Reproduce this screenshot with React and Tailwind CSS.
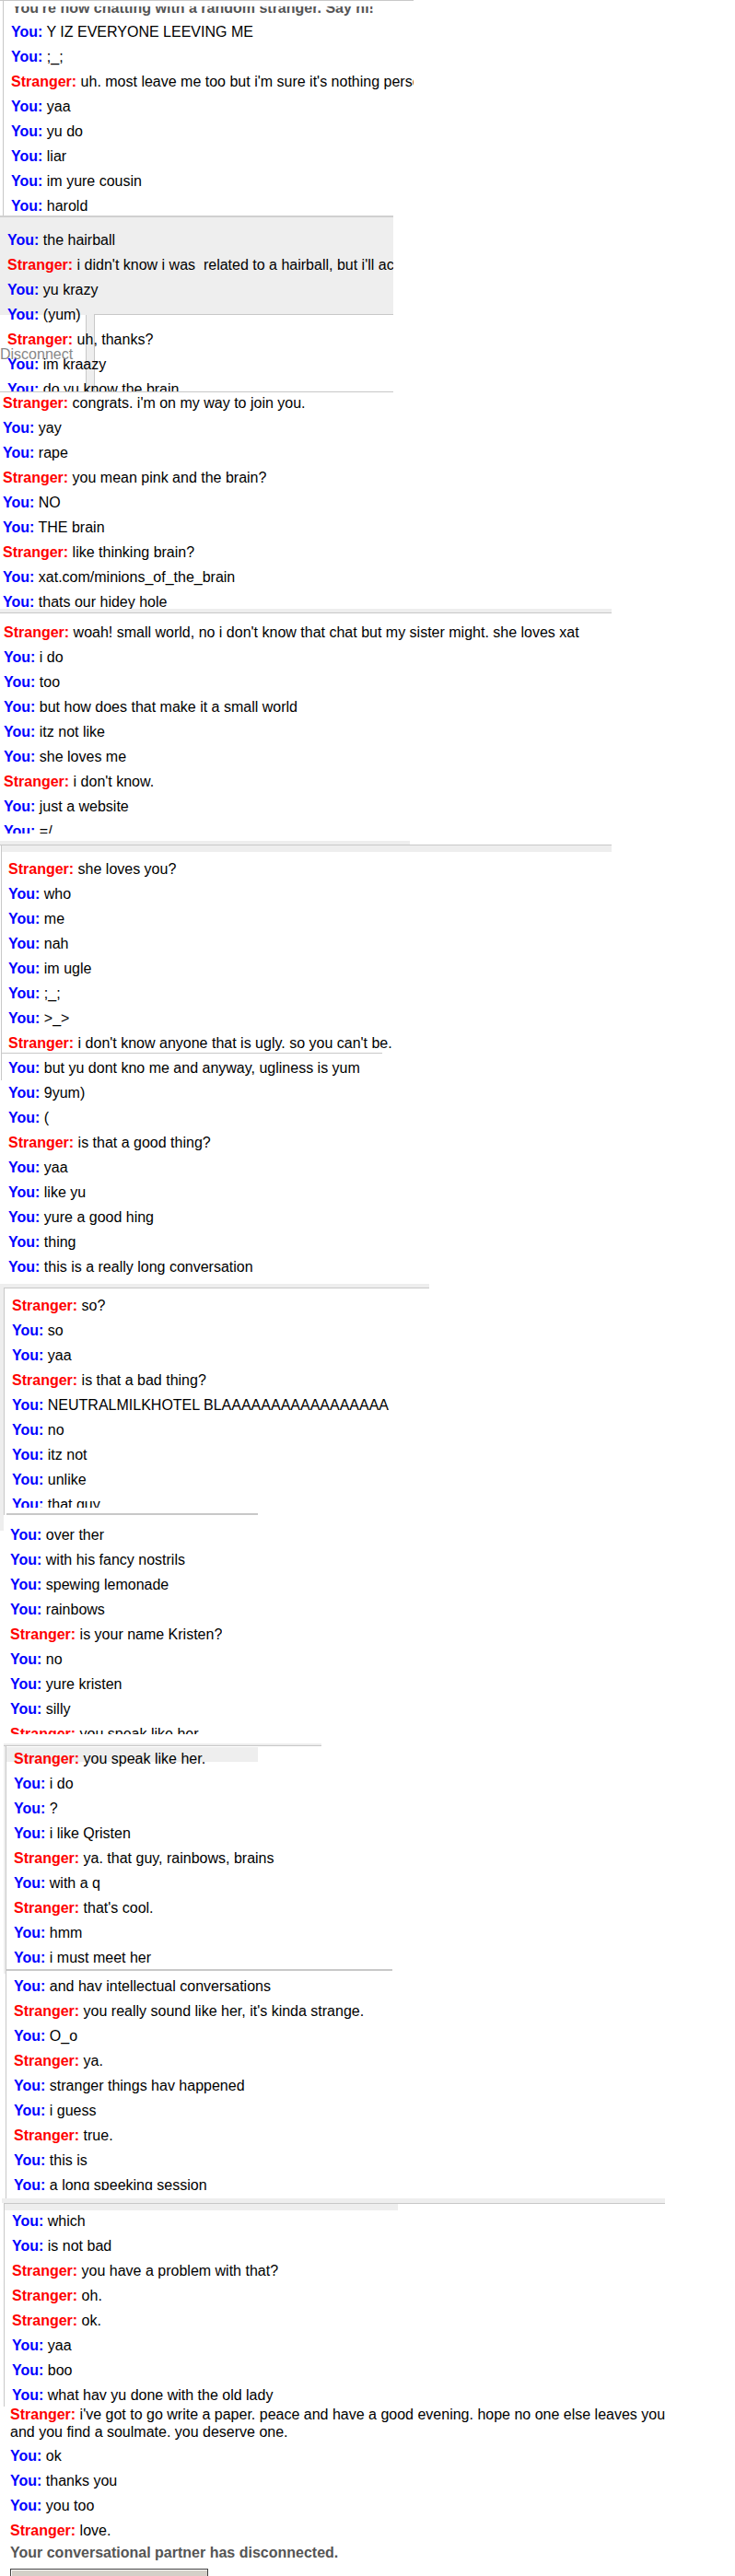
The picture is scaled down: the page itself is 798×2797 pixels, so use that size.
import clsx from "clsx";

const s1 = [
  ["you", "Y IZ EVERYONE LEEVING ME"],
  ["you", ";_;"],
  ["stranger", "uh. most leave me too but i'm sure it's nothing personal."],
  ["you", "yaa"],
  ["you", "yu do"],
  ["you", "liar"],
  ["you", "im yure cousin"],
  ["you", "harold"],
];

const s2 = [
  ["you", "the hairball"],
  ["stranger", "i didn't know i was  related to a hairball, but i'll accept that"],
  ["you", "yu krazy"],
  ["you", "(yum)"],
  ["stranger", "uh, thanks?"],
  ["you", "im kraazy"],
  ["you", "do yu know the brain"],
];

const s3 = [
  ["stranger", "congrats. i'm on my way to join you."],
  ["you", "yay"],
  ["you", "rape"],
  ["stranger", "you mean pink and the brain?"],
  ["you", "NO"],
  ["you", "THE brain"],
  ["stranger", "like thinking brain?"],
  ["you", "xat.com/minions_of_the_brain"],
  ["you", "thats our hidey hole"],
];

const s4 = [
  ["stranger", "woah! small world, no i don't know that chat but my sister might. she loves xat"],
  ["you", "i do"],
  ["you", "too"],
  ["you", "but how does that make it a small world"],
  ["you", "itz not like"],
  ["you", "she loves me"],
  ["stranger", "i don't know."],
  ["you", "just a website"],
  ["you", "=/"],
];

const s5a = [
  ["stranger", "she loves you?"],
  ["you", "who"],
  ["you", "me"],
  ["you", "nah"],
  ["you", "im ugle"],
  ["you", ";_;"],
  ["you", ">_>"],
  ["stranger", "i don't know anyone that is ugly. so you can't be."],
];

const s5b = [
  ["you", "9yum)"],
  ["you", "("],
  ["stranger", "is that a good thing?"],
  ["you", "yaa"],
  ["you", "like yu"],
  ["you", "yure a good hing"],
  ["you", "thing"],
  ["you", "this is a really long conversation"],
];

const s6 = [
  ["stranger", "so?"],
  ["you", "so"],
  ["you", "yaa"],
  ["stranger", "is that a bad thing?"],
  ["you", "NEUTRALMILKHOTEL BLAAAAAAAAAAAAAAAAA"],
  ["you", "no"],
  ["you", "itz not"],
  ["you", "unlike"],
  ["you", "that guy"],
];

const s7 = [
  ["you", "over ther"],
  ["you", "with his fancy nostrils"],
  ["you", "spewing lemonade"],
  ["you", "rainbows"],
  ["stranger", "is your name Kristen?"],
  ["you", "no"],
  ["you", "yure kristen"],
  ["you", "silly"],
  ["stranger", "you speak like her."],
];

const s8a = [
  ["you", "i do"],
  ["you", "?"],
  ["you", "i like Qristen"],
  ["stranger", "ya. that guy, rainbows, brains"],
  ["you", "with a q"],
  ["stranger", "that's cool."],
  ["you", "hmm"],
  ["you", "i must meet her"],
];

const s8b = [
  ["you", "and hav intellectual conversations"],
  ["stranger", "you really sound like her, it's kinda strange."],
  ["you", "O_o"],
  ["stranger", "ya."],
  ["you", "stranger things hav happened"],
  ["you", "i guess"],
  ["stranger", "true."],
  ["you", "this is"],
  ["you", "a long speeking session"],
];

const s9 = [
  ["you", "which"],
  ["you", "is not bad"],
  ["stranger", "you have a problem with that?"],
  ["stranger", "oh."],
  ["stranger", "ok."],
  ["you", "yaa"],
  ["you", "boo"],
  ["you", "what hav yu done with the old lady"],
];

const s10 = [
  ["you", "ok"],
  ["you", "thanks you"],
  ["you", "you too"],
  ["stranger", "love."],
];

function Who({ who }) {
  return who === "you" ? (
    <b className="text-[#0000ff]">You:</b>
  ) : (
    <b className="text-[#ff0000]">Stranger:</b>
  );
}

function Msg({ who, text, className }) {
  return (
    <div className={clsx("whitespace-pre py-[4px] leading-[19px]", className)}>
      <Who who={who} /> {text}
    </div>
  );
}

function Rows({ items }) {
  return items.map(([who, text], i) => <Msg key={i} who={who} text={text} />);
}

export default function App() {
  return (
    <div className="h-[2797px] w-[798px] overflow-hidden bg-white font-['Liberation_Sans',Arial,sans-serif] text-[16px] text-black">
      {/* first shot, its status line cut off at the top */}
      <div className="h-[234px] w-[449px] overflow-hidden border-t border-[#c8c8c8]">
        <div className="ml-[3px] h-full border-l border-[#c8c8c8] pl-[8px]">
          <div className="h-[6px]" />
          <div className="h-[14px] overflow-hidden">
            <div className="-mt-[8px] whitespace-pre pl-px font-bold leading-[19px] text-[#555]">
              You're now chatting with a random stranger. Say hi!
            </div>
          </div>
          <Rows items={s1} />
        </div>
      </div>

      {/* gray shot with the disconnect button */}
      <div className="relative h-[191px] w-[427px] overflow-hidden">
        <div className="absolute left-0 top-0 h-[108px] w-full border-t-2 border-[#d0d0d0] bg-[#eee]" />
        <div className="absolute left-0 top-[108px] h-[83px] w-[94px] border-r border-[#c8c8c8] bg-white" />
        <div className="absolute left-[94px] top-[108px] h-[83px] w-[8px] bg-[#eee]" />
        <div className="absolute left-[102px] right-0 top-[107px] h-[84px] border-l border-t border-[#c8c8c8] bg-white" />
        <div className="relative pl-[8px] pt-[13px]">
          <Rows items={s2} />
        </div>
        <div className="absolute left-0 top-[141px] leading-[19px] text-[#888]">Disconnect</div>
      </div>

      <div className="h-[236px] overflow-hidden">
        <div className="h-px w-[427px] bg-[#c8c8c8]" />
        <div className="-mt-[2px] pl-[3px]">
          <Rows items={s3} />
        </div>
      </div>

      <div className="h-[252px] overflow-hidden">
        <div className="h-[4px] w-[664px] bg-[#eee]" />
        <div className="h-px w-[664px] bg-[#c8c8c8]" />
        <div className="h-[239px] overflow-hidden pl-[4px] pt-[7px]">
          <Rows items={s4} />
        </div>
      </div>

      <div className="h-[481px] overflow-hidden">
        <div className="h-[4px] w-[445px] bg-[#eee]" />
        <div className="h-px w-[664px] bg-[#c8c8c8]" />
        <div className="ml-px h-[7px] w-[663px] border-l border-[#c8c8c8] bg-[#eee]" />
        <div className="ml-px border-l border-[#c8c8c8] pl-[7px] pt-[5px]">
          <Rows items={s5a} />
          <div className="-ml-[7px] -mt-[3px] mb-[2px] h-px w-[413px] bg-[#c8c8c8]" />
          <Msg who="you" text="but yu dont kno me and anyway, ugliness is yum" />
        </div>
        <div className="pl-[9px]">
          <Rows items={s5b} />
        </div>
      </div>

      <div className="h-[251px]">
        <div className="h-[4px] w-[466px] bg-[#eee]" />
        <div className="flex h-[247px]">
          <div className="w-[4px] shrink-0 bg-[#eee]" />
          <div className="w-[462px] border-l border-t border-[#c8c8c8]">
            <div className="h-[238px] overflow-hidden pl-[8px] pt-[5px]">
              <Rows items={s6} />
            </div>
            <div className="h-[6px]" />
            <div className="ml-[2px] h-[2px] w-[273px] bg-[#c8c8c8]" />
          </div>
        </div>
      </div>

      <div className="flex h-[248px] items-start">
        <div className="h-[17px] w-[4px] shrink-0 bg-[#eee]" />
        <div className="h-[238px] overflow-hidden pl-[7px] pt-[8px]">
          <Rows items={s7} />
        </div>
      </div>

      <div className="h-[494px]">
        <div className="ml-[4px] h-[2px] w-[345px] bg-[#eee]" />
        <div className="ml-[4px] h-px w-[345px] bg-[#c8c8c8]" />
        <div className="ml-[4px] flex h-[491px] items-start">
          <div className="h-[247px] w-[2px] shrink-0 bg-[#eee]" />
          <div className="h-full w-[716px] border-l border-[#c8c8c8]">
            <div className="h-[482px] overflow-hidden pl-[8px]">
              <div className="relative whitespace-pre py-[4px] leading-[19px]">
                <div className="absolute -left-[8px] top-px h-[16px] w-[273px] bg-[#eee]" />
                <span className="relative">
                  <Who who="stranger" /> you speak like her.
                </span>
              </div>
              <Rows items={s8a} />
              <div className="-ml-[8px] -mt-px mb-[3px] h-[2px] w-[419px] bg-[#c8c8c8]" />
              <Rows items={s8b} />
            </div>
          </div>
        </div>
      </div>

      <div className="h-[226px]">
        <div className="ml-[2px] h-[5px] w-[720px] bg-[#eee]" />
        <div className="ml-[4px] h-px w-[718px] bg-[#c8c8c8]" />
        <div className="relative ml-[4px] h-[220px] overflow-hidden border-l border-[#c8c8c8]">
          <div className="absolute left-0 top-0 h-[7px] w-[427px] bg-[#eee]" />
          <div className="relative pl-[8px] pt-[5px]">
            <Rows items={s9} />
          </div>
        </div>
      </div>

      <div className="-mt-px pl-[11px]">
        <div className="pb-[3px] leading-[19px]">
          <div className="whitespace-pre">
            <Who who="stranger" /> i've got to go write a paper. peace and have a good evening. hope no one else leaves you
          </div>
          <div className="whitespace-pre">and you find a soulmate. you deserve one.</div>
        </div>
        <Rows items={s10} />
        <div className="pt-px font-bold leading-[19px] text-[#555]">
          Your conversational partner has disconnected.
        </div>
        <div className="mt-[8px] flex h-[30px] w-[215px] items-start justify-center border border-[#404040] bg-[#d4d0c8] pt-[3px] shadow-[inset_1px_1px_0_#fff]">
          Start a new conversation
        </div>
      </div>
    </div>
  );
}
